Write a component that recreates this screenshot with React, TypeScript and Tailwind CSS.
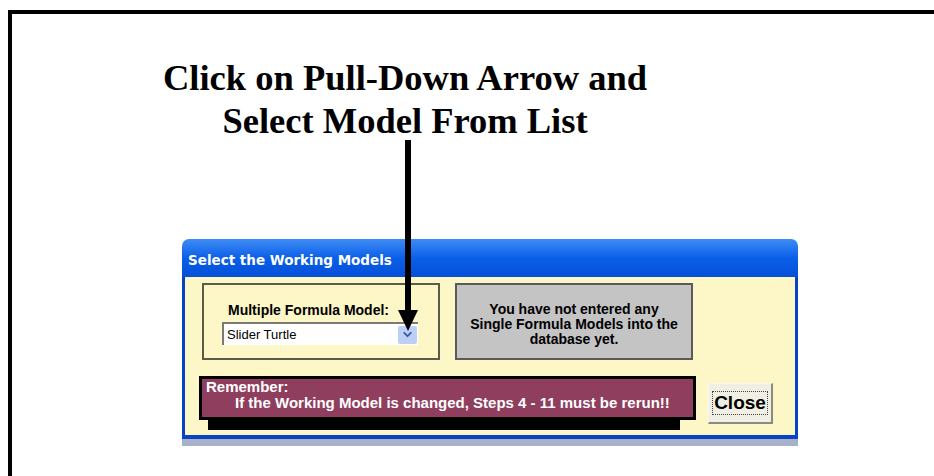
import { ChevronDown } from "lucide-react";

const sans = { fontFamily: '"Liberation Sans", Arial, sans-serif' };

function DownArrow() {
  return (
    <svg
      className="absolute left-[396px] top-[140px]"
      width="24"
      height="194"
      viewBox="0 0 24 194"
    >
      <rect x="9" y="0" width="6" height="175" fill="#000" />
      <polygon points="2,170 22,170 12,191" fill="#000" />
    </svg>
  );
}

function Dialog() {
  return (
    <div className="ml-[170px] w-[616px]" style={sans}>
      {/* title bar */}
      <div className="flex h-[38px] items-center rounded-t-[7px] bg-gradient-to-b from-[#3d8cf5] via-[#0a5ee8] to-[#0650d8] pl-[6px] pt-[5px]">
        <span
          className="text-[13.5px] font-bold text-white"
          style={{ fontFamily: '"DejaVu Sans", Verdana, sans-serif' }}
        >
          Select the Working Models
        </span>
      </div>

      {/* body */}
      <div className="border-x-[3px] border-b-[4px] border-[#0842c8] bg-[#fdf6c6] pb-[5px]">
        <div className="flex gap-[15px] pl-[17px] pt-[6px]">
          <div className="h-[77px] w-[238px] border-2 border-[#5c5a48] pl-[24px] pt-[18px]">
            <div className="text-[14px] font-bold leading-[15px] text-black">
              Multiple Formula Model:
            </div>
            <div className="ml-[-6px] mt-[4px] flex h-[23px] w-[196px] items-center justify-between border-l-2 border-t-2 border-[#7a7a7a] bg-white pl-[3px] pr-[1px]">
              <span className="text-[13px] text-black">Slider Turtle</span>
              <span className="flex h-[18px] w-[19px] items-center justify-center rounded-[2px] bg-[#bcd0f6]">
                <ChevronDown size={13} strokeWidth={3.5} color="#3b5aa8" />
              </span>
            </div>
          </div>
          <div className="flex h-[77px] w-[238px] items-center justify-center border-2 border-[#5a5a5a] bg-[#c4c4c4] pt-[6px] text-center">
            <p className="text-[14px] font-bold leading-[15px] text-black">
              You have not entered any
              <br />
              Single Formula Models into the
              <br />
              database yet.
            </p>
          </div>
        </div>

        <div className="mt-[16px] flex items-start pl-[14px]">
          <div className="w-[497px]">
            <div className="h-[44px] border-[3px] border-black bg-[#8f3e5e] pl-[4px] text-[15px] font-bold leading-[16px] text-white">
              <div>Remember:</div>
              <div className="pl-[29px]">
                If the Working Model is changed, Steps 4 - 11 must be rerun!!
              </div>
            </div>
            <div className="ml-[9px] h-[10px] w-[472px] bg-black" />
          </div>
          <div className="ml-[12px] mt-[7px] flex h-[41px] w-[65px] items-center justify-center border border-b-2 border-r-2 border-[#f8f8f0] border-b-[#8a8a80] border-r-[#8a8a80] bg-[#f1efe4]">
            <span className="border border-dotted border-[#444] px-px text-[19px] font-bold leading-[22px] text-black">
              Close
            </span>
          </div>
        </div>
      </div>
      <div className="h-[7px] bg-[#a9b1c9]" />
    </div>
  );
}

export default function App() {
  return (
    <div className="relative h-[476px] w-[934px] overflow-hidden bg-white">
      <div className="ml-[8px] mt-[10px] h-[466px] border-l-4 border-t-4 border-black">
        <div
          className="w-[786px] pt-[42px] text-center text-[36.5px] font-bold leading-[43px] text-black"
          style={{ fontFamily: '"Liberation Serif", "Times New Roman", serif' }}
        >
          <div>Click on Pull-Down Arrow and</div>
          <div>Select Model From List</div>
        </div>
        <div className="mt-[97px]">
          <Dialog />
        </div>
      </div>
      <DownArrow />
    </div>
  );
}
